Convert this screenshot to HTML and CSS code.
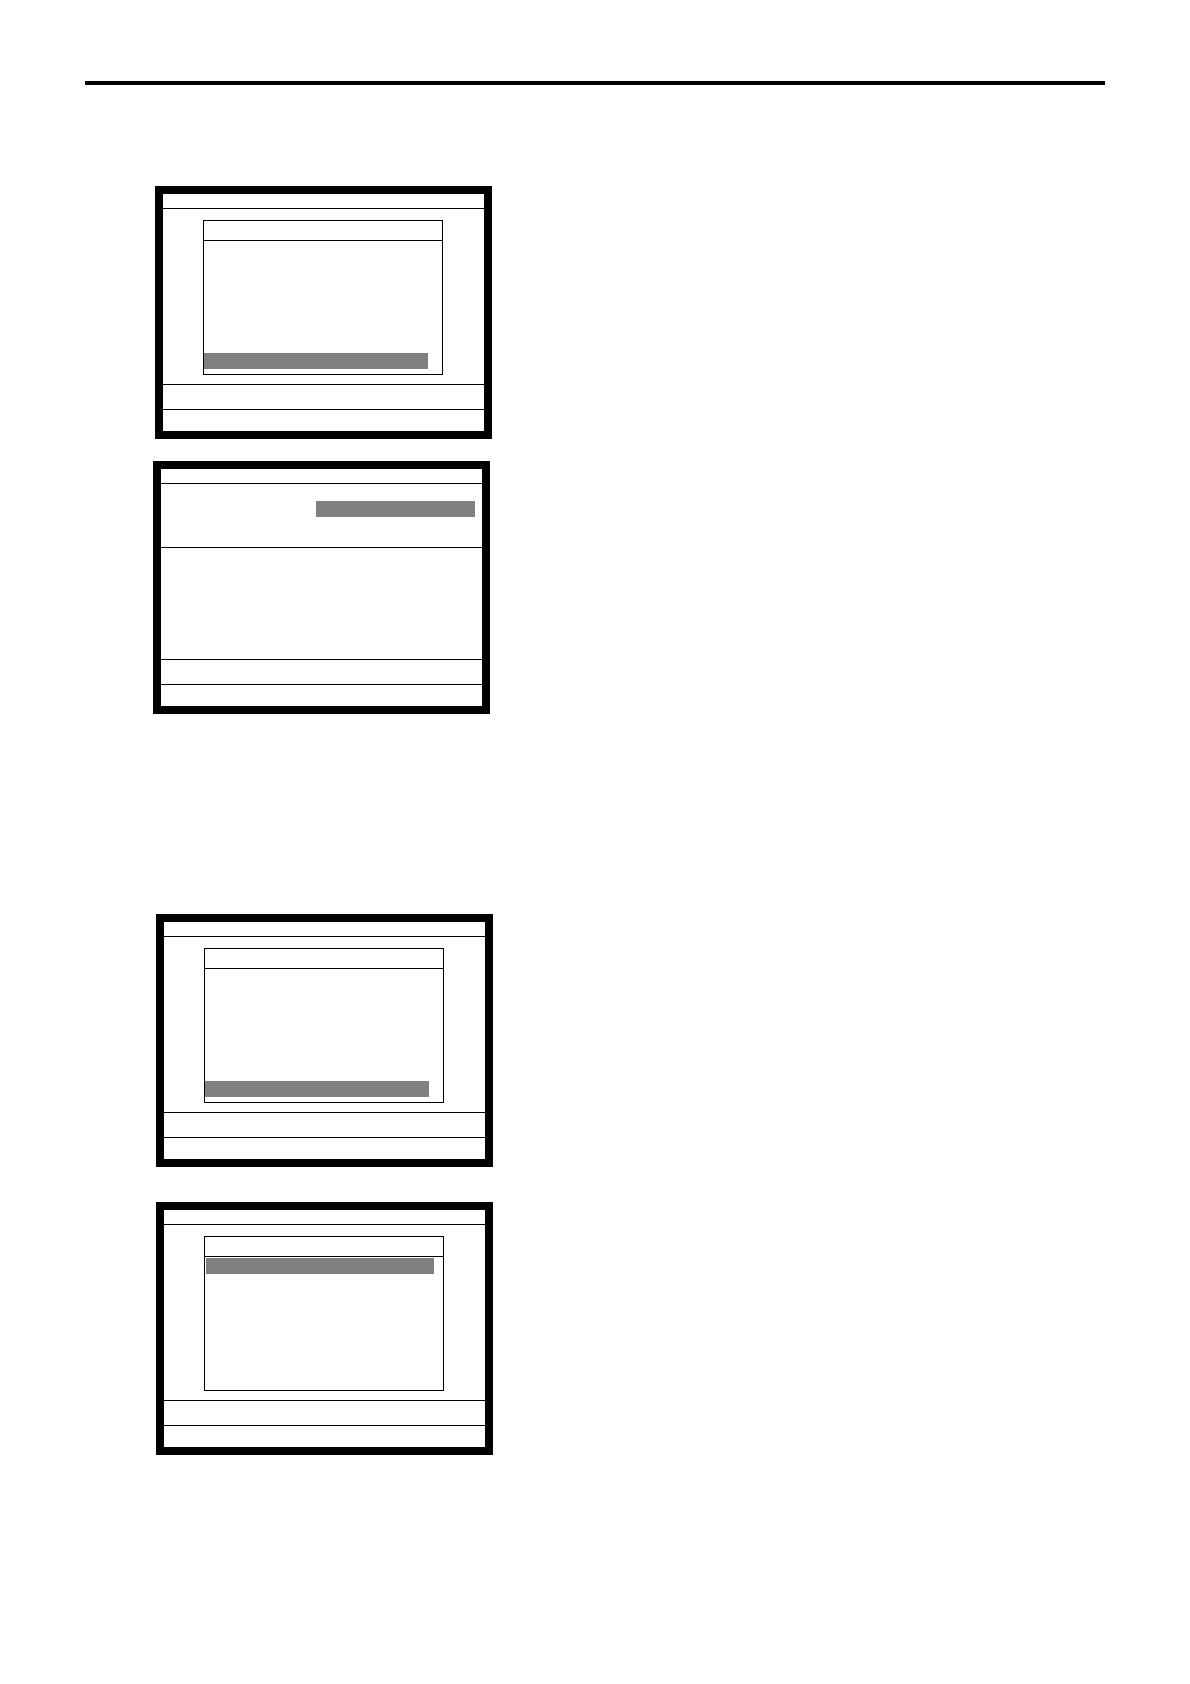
FILE: index.html
```html
<!DOCTYPE html>
<html lang="en">
<head>
    <meta charset="UTF-8">
    <meta name="viewport" content="width=device-width, initial-scale=1.0">
    <title>Screens</title>
    <link rel="stylesheet" href="styles.css">
</head>
<body>
    <main class="page">
        <hr>

        <section class="group">
            <div class="screen">
                <div class="title-bar"></div>
                <div class="content">
                    <div class="menu">
                        <div class="menu-title"></div>
                        <div class="menu-list last">
                            <div class="selected"></div>
                        </div>
                    </div>
                </div>
                <div class="message"></div>
                <div class="keys"></div>
            </div>

            <div class="screen entry">
                <div class="title-bar"></div>
                <div class="fields">
                    <div class="selected"></div>
                </div>
                <div class="details"></div>
                <div class="message"></div>
                <div class="keys"></div>
            </div>
        </section>

        <section class="group next">
            <div class="screen">
                <div class="title-bar"></div>
                <div class="content">
                    <div class="menu">
                        <div class="menu-title"></div>
                        <div class="menu-list last">
                            <div class="selected"></div>
                        </div>
                    </div>
                </div>
                <div class="message"></div>
                <div class="keys"></div>
            </div>

            <div class="screen">
                <div class="title-bar"></div>
                <div class="content">
                    <div class="menu">
                        <div class="menu-title"></div>
                        <div class="menu-list first">
                            <div class="selected"></div>
                        </div>
                    </div>
                </div>
                <div class="message"></div>
                <div class="keys"></div>
            </div>
        </section>
    </main>
</body>
</html>
```

FILE: styles.css
```css
* {
    box-sizing: border-box;
}
body {
    margin: 0;
    background: #fff;
    font-family: "Liberation Sans", Arial, sans-serif;
}
.page {
    padding: 81px 85px 229px;
}
hr {
    height: 4px;
    margin: 0 0 101px;
    border: none;
    background: #000;
}

/* Groups of screens */
.group {
    display: flex;
    flex-direction: column;
    gap: 22px;
    padding-left: 70px;
}
.group.next {
    gap: 35px;
    margin-top: 200px;
    padding-left: 71px;
}

/* Screen frame */
.screen {
    width: 337px;
    max-width: 100%;
    border: 8px solid #000;
}
.screen.entry {
    margin-left: -2px;
}
.title-bar {
    height: 15px;
    border-bottom: 1px solid #000;
}
.content {
    height: 175px;
    padding: 11px 41px 9px 40px;
}
.message {
    height: 25px;
    border-top: 1px solid #000;
}
.keys {
    height: 22px;
    border-top: 1px solid #000;
}

/* Menu window */
.menu {
    display: flex;
    flex-direction: column;
    height: 100%;
    border: 1px solid #000;
}
.menu-title {
    height: 20px;
    border-bottom: 1px solid #000;
}
.menu-list {
    display: flex;
    flex: 1;
    flex-direction: column;
}
.menu-list.last {
    justify-content: flex-end;
    padding: 0 14px 5px 0;
}
.menu-list.first {
    padding: 1px 9px 0 1px;
}
.selected {
    height: 16px;
    background: #808080;
}

/* Entry screen */
.fields {
    height: 64px;
    padding: 17px 7px 0 155px;
    border-bottom: 1px solid #000;
}
.details {
    height: 111px;
}
```
